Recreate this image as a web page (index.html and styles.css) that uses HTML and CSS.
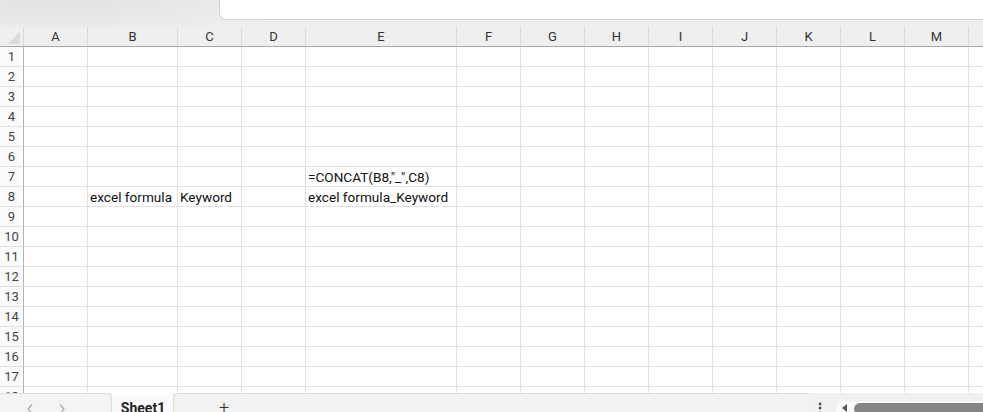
FILE: index.html
```html
<!DOCTYPE html>
<html>
<head>
<meta charset="utf-8">
<link rel="stylesheet" href="styles.css">
</head>
<body>
<div class="app">
  <div class="top"><div class="fbox"></div></div>
  <div class="sheet">
    <div class="row hdr">
      <div class="corner"><span class="tri"></span></div>
      <div class="ch">A</div><div class="ch">B</div><div class="ch">C</div><div class="ch">D</div><div class="ch">E</div><div class="ch">F</div><div class="ch">G</div><div class="ch">H</div><div class="ch">I</div><div class="ch">J</div><div class="ch">K</div><div class="ch">L</div><div class="ch">M</div><div class="ch"></div>
    </div>
    <div id="rows"></div>
  </div>
  <div class="bar">
    <div class="nav">
      <svg class="arr" width="8" height="10" viewBox="0 0 8 10"><path d="M6 0.5 L2 5 L6 9.5" fill="none" stroke="#a8a8a8" stroke-width="1.2"/></svg>
      <svg class="arr" width="8" height="10" viewBox="0 0 8 10"><path d="M2 0.5 L6 5 L2 9.5" fill="none" stroke="#a8a8a8" stroke-width="1.2"/></svg>
    </div>
    <div class="tab">Sheet1</div>
    <div class="addbox"><span class="plus">+</span></div>
    <div class="dots">&#x22EE;</div>
    <div class="hscroll"><span class="larr"></span><span class="thumb"></span></div>
  </div>
</div>
<script>
  var data = {7: {5: '=CONCAT(B8,"_",C8)'}, 8: {2: 'excel formula', 3: 'Keyword', 5: 'excel formula_Keyword'}};
  var rows = document.getElementById('rows');
  for (var r = 1; r <= 18; r++) {
    var row = document.createElement('div');
    row.className = 'row';
    var h = document.createElement('div');
    h.className = 'rh';
    h.textContent = r;
    row.appendChild(h);
    for (var c = 1; c <= 14; c++) {
      var cell = document.createElement('div');
      cell.className = 'cell';
      if (data[r] && data[r][c]) cell.textContent = data[r][c];
      row.appendChild(cell);
    }
    rows.appendChild(row);
  }
</script>
</body>
</html>
```
FILE: styles.css
```css
html, body {
  margin: 0;
  padding: 0;
  background: #ffffff;
  overflow: hidden;
}
.app {
  width: 983px;
  height: 412px;
  display: flex;
  flex-direction: column;
  overflow: hidden;
  font-family: Roboto, "Liberation Sans", sans-serif;
}
.top {
  height: 27px;
  flex: none;
  display: flex;
  background: radial-gradient(ellipse 260px 40px at 60px 0px, #e2e2e2, #efefef);
}
.fbox {
  margin-left: 219px;
  flex: 1;
  height: 20px;
  box-sizing: border-box;
  background: #ffffff;
  border-left: 1px solid #d2d2d2;
  border-bottom: 1px solid #d2d2d2;
  border-bottom-left-radius: 7px;
}
.sheet {
  height: 366px;
  flex: none;
  overflow: hidden;
}
.row {
  display: grid;
  grid-template-columns: 24px 64px 90px 64px 64px 151px repeat(9, 64px);
  height: 20px;
}
.hdr {
  background: #efefef;
}
.corner, .ch {
  box-sizing: border-box;
  height: 20px;
  border-bottom: 1px solid #a9a9a9;
  border-right: 1px solid #dadada;
  position: relative;
}
.ch {
  font-size: 13px;
  color: #333;
  text-align: center;
  line-height: 20px;
}
.tri {
  position: absolute;
  right: 3px;
  bottom: 2px;
  width: 0;
  height: 0;
  border-left: 12px solid transparent;
  border-bottom: 13px solid #dcdcdc;
}
.rh {
  box-sizing: border-box;
  height: 20px;
  background: #fbfbfb;
  border-right: 1px solid #b3b3b3;
  border-bottom: 1px solid #e1e1e1;
  font-size: 13px;
  color: #444;
  text-align: center;
  line-height: 20px;
}
.cell {
  box-sizing: border-box;
  height: 20px;
  border-right: 1px solid #e1e1e1;
  border-bottom: 1px solid #e1e1e1;
  font-size: 13.6px;
  color: #111;
  line-height: 20px;
  padding-left: 2px;
  white-space: nowrap;
  overflow: visible;
}
.bar {
  flex: 1;
  display: flex;
  background: #f0f0f0;
  position: relative;
}
.nav {
  width: 112px;
  box-sizing: border-box;
  background: #f4f4f4;
  border-top: 1px solid #dcdcdc;
  border-right: 1px solid #dcdcdc;
  border-top-right-radius: 6px;
  display: flex;
  align-items: flex-start;
  padding-left: 26px;
  padding-top: 10px;
  gap: 24px;
}
.arr {
  flex: none;
  display: block;
}
.tab {
  width: 60px;
  background: #fafafa;
  font-size: 14px;
  font-weight: 700;
  color: #222;
  text-align: center;
  line-height: 30px;
  padding-left: 1px;
}
.addbox {
  width: 636px;
  box-sizing: border-box;
  background: #f2f2f2;
  border-top: 1px solid #dcdcdc;
  border-left: 1px solid #dcdcdc;
  border-top-left-radius: 6px;
  padding-left: 45px;
}
.plus {
  font-size: 18px;
  color: #333;
  line-height: 28px;
  font-weight: 300;
}
.dots {
  width: 27px;
  color: #333;
  font-size: 14px;
  line-height: 30px;
  text-align: left;
  padding-left: 4px;
  box-sizing: border-box;
  font-weight: 700;
}
.hscroll {
  flex: 1;
  margin-top: 8px;
  background: #f9f9f9;
  border-top-left-radius: 8px;
  display: flex;
  align-items: flex-start;
  padding-top: 3px;
  padding-left: 6px;
  box-sizing: border-box;
}
.larr {
  width: 0;
  height: 0;
  border-top: 4px solid transparent;
  border-bottom: 4px solid transparent;
  border-right: 5px solid #555;
  margin-right: 7px;
}
.thumb {
  flex: 1;
  height: 12px;
  margin-top: -1px;
  background: #858585;
  border-top-left-radius: 6px;
  border-bottom-left-radius: 6px;
}
```
